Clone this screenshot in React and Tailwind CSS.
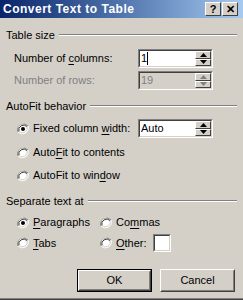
const FONT = { fontFamily: 'Tahoma, "Liberation Sans", Arial, sans-serif' }

function U({ children }) {
  return <span className="underline underline-offset-[2px]">{children}</span>
}

function GroupTitle({ children }) {
  return (
    <div className="flex items-center gap-[4px] h-[14px]">
      <span className="whitespace-nowrap">{children}</span>
      <div className="flex-1 flex flex-col">
        <div className="h-px bg-[#808080]" />
        <div className="h-px bg-white" />
      </div>
    </div>
  )
}

function Arrow({ up, disabled }) {
  return (
    <svg width="7" height="4" viewBox="0 0 7 4" className="block">
      {up ? (
        <polygon points="3.5,0 7,4 0,4" fill={disabled ? '#808080' : '#000'} />
      ) : (
        <polygon points="0,0 7,0 3.5,4" fill={disabled ? '#808080' : '#000'} />
      )}
    </svg>
  )
}

function SpinBtn({ up, disabled }) {
  return (
    <div className="flex-1 flex items-center justify-center bg-[#D4D0C8] border border-t-white border-l-white border-r-[#404040] border-b-[#404040]">
      <Arrow up={up} disabled={disabled} />
    </div>
  )
}

function Spin({ value, disabled, cursor }) {
  return (
    <div className="w-[75px] h-[19px] border border-t-[#808080] border-l-[#808080] border-r-white border-b-white">
      <div
        className={`h-full flex border border-t-[#404040] border-l-[#404040] border-r-[#D4D0C8] border-b-[#D4D0C8] ${
          disabled ? 'bg-[#D4D0C8] text-[#808080]' : 'bg-white text-black'
        }`}
      >
        <div className="flex-1 flex items-center pl-[1px]">
          {value}
          {cursor ? <span className="inline-block w-px h-[13px] bg-black" /> : null}
        </div>
        <div className="w-[16px] flex flex-col">
          <SpinBtn up disabled={disabled} />
          <SpinBtn disabled={disabled} />
        </div>
      </div>
    </div>
  )
}

function Radio({ checked, children, className = '' }) {
  return (
    <div className={`flex items-center gap-[4px] h-[13px] ${className}`}>
      <svg width="12" height="12" viewBox="0 0 12 12" className="block shrink-0">
        <path d="M11 3 A6 6 0 0 0 1 9" stroke="#808080" strokeWidth="1" fill="none" />
        <path d="M1 9 A6 6 0 0 0 11 3" stroke="#fff" strokeWidth="1" fill="none" />
        <circle cx="6" cy="6" r="4.5" fill="#fff" />
        <path d="M10 3.6 A4.8 4.8 0 0 0 2 8.4" stroke="#404040" strokeWidth="1" fill="none" />
        <path d="M2 8.4 A4.8 4.8 0 0 0 10 3.6" stroke="#D4D0C8" strokeWidth="1" fill="none" />
        {checked ? <circle cx="6" cy="6" r="2" fill="#000" /> : null}
      </svg>
      <span className="whitespace-nowrap">{children}</span>
    </div>
  )
}

function Button({ children, isDefault }) {
  return (
    <div className={`w-[75px] h-[23px] ${isDefault ? 'border border-black' : ''}`}>
      <div className="h-full border border-t-white border-l-white border-r-[#404040] border-b-[#404040]">
        <div className="h-full flex items-center justify-center border border-t-[#D4D0C8] border-l-[#D4D0C8] border-r-[#808080] border-b-[#808080]">
          {children}
        </div>
      </div>
    </div>
  )
}

function TitleBtn({ children }) {
  return (
    <div className="w-[16px] h-[14px] bg-[#D4D0C8] border border-t-white border-l-white border-r-[#404040] border-b-[#404040] flex items-center justify-center text-[11px] font-bold leading-none text-black">
      {children}
    </div>
  )
}

export default function App() {
  return (
    <div className="w-[243px] h-[300px] bg-[#D4D0C8] text-[11px] leading-[13px] text-black flex flex-col overflow-hidden" style={FONT}>
      <div className="h-[18px] shrink-0 flex items-center pl-[3px] pr-[5px] bg-gradient-to-r from-[#0A246A] to-[#A6CAF0]">
        <span className="flex-1 text-white font-bold text-[12px] tracking-[0.5px]">Convert Text to Table</span>
        <div className="flex gap-[1px]">
          <TitleBtn>?</TitleBtn>
          <TitleBtn>✕</TitleBtn>
        </div>
      </div>

      <div className="flex-1 flex flex-col pl-[6px] pr-[6px] pt-[10px]">
        <GroupTitle>Table size</GroupTitle>
        <div className="flex flex-col gap-[3px] pl-[8px] mt-[7px]">
          <div className="flex items-center justify-between pr-[24px]">
            <span>Number of <U>c</U>olumns:</span>
            <Spin value="1" cursor />
          </div>
          <div className="flex items-center justify-between pr-[24px] text-[#808080]">
            <span>Number of rows:</span>
            <Spin value="19" disabled />
          </div>
        </div>

        <div className="mt-[9px]">
          <GroupTitle>AutoFit behavior</GroupTitle>
        </div>
        <div className="flex flex-col pl-[11px] mt-[6px]">
          <div className="flex items-center justify-between pr-[24px]">
            <Radio checked>Fixed column <U>w</U>idth:</Radio>
            <Spin value="Auto" />
          </div>
          <Radio className="mt-[8px]">Auto<U>F</U>it to contents</Radio>
          <Radio className="mt-[10px]">AutoFit to win<U>d</U>ow</Radio>
        </div>

        <div className="mt-[12px]">
          <GroupTitle>Separate text at</GroupTitle>
        </div>
        <div className="grid grid-cols-[83px_1fr] pl-[11px] mt-[8px] gap-y-[5px] items-center">
          <Radio checked><U>P</U>aragraphs</Radio>
          <Radio>Co<U>m</U>mas</Radio>
          <Radio><U>T</U>abs</Radio>
          <div className="flex items-center gap-[6px]">
            <Radio><U>O</U>ther:</Radio>
            <div className="w-[18px] h-[18px] border border-t-[#808080] border-l-[#808080] border-r-white border-b-white">
              <div className="h-full bg-white border border-t-[#404040] border-l-[#404040] border-r-[#D4D0C8] border-b-[#D4D0C8]" />
            </div>
          </div>
        </div>

        <div className="flex justify-end gap-[8px] mt-[17px] pr-[2px]">
          <Button isDefault>OK</Button>
          <Button>Cancel</Button>
        </div>
      </div>
      <div className="h-px shrink-0 bg-[#808080]" />
      <div className="h-px shrink-0 bg-[#404040]" />
    </div>
  )
}
